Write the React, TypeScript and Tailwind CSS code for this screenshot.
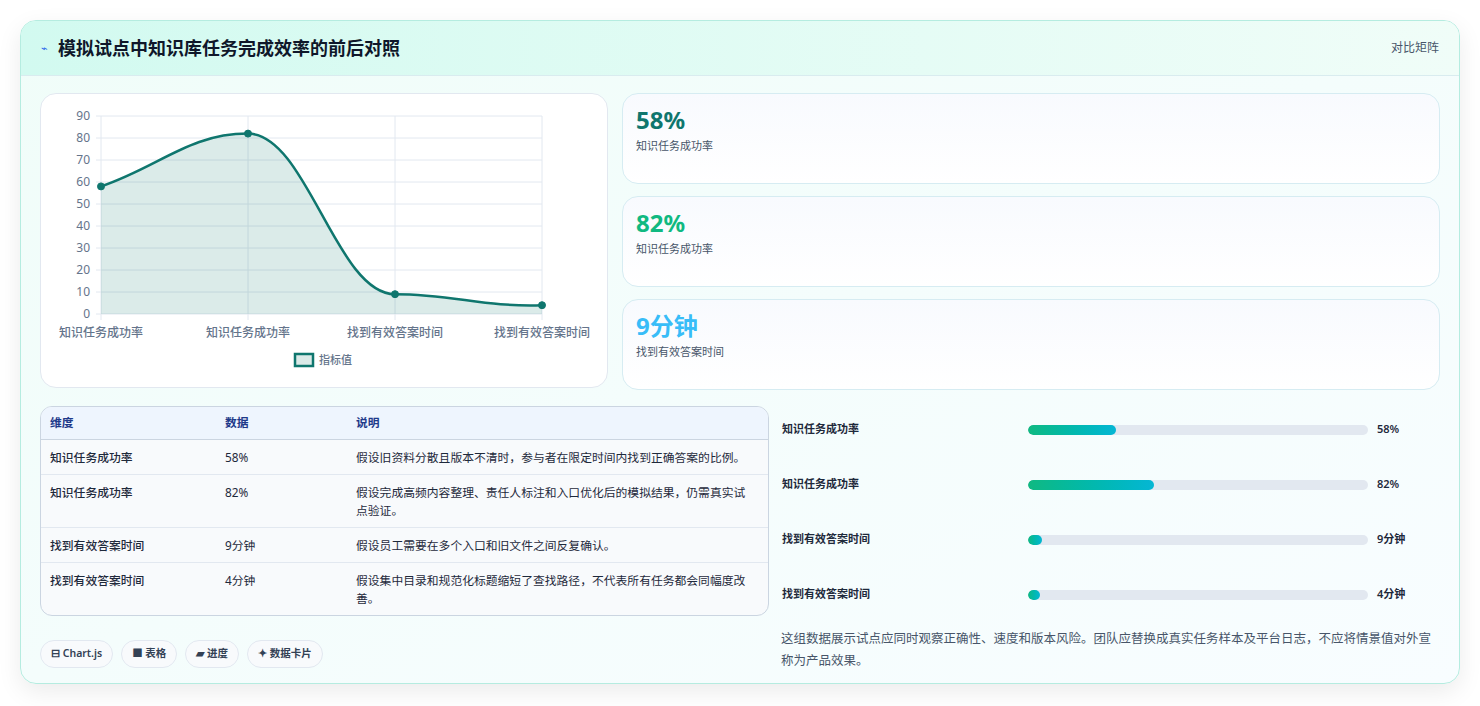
import React from "react";

const F = { fontFamily: '"Noto Sans", "Noto Sans CJK SC", sans-serif' };

function Chart() {
  const xs = [60, 207, 354, 501];
  const vals = [58, 82, 9, 4];
  const y = (v: number) => 220 - v * 2.2;
  const pts = xs.map((x, i) => [x, y(vals[i])]);
  let d = `M${pts[0][0]},${pts[0][1]}`;
  for (let i = 0; i < pts.length - 1; i++) {
    const [x0, y0] = pts[i];
    const [x1, y1] = pts[i + 1];
    const dx = (x1 - x0) * 0.4;
    d += ` C${x0 + dx},${y0 - (i === 0 ? 20 : 0)} ${x1 - dx},${y1 + (i === 2 ? 2 : 0)} ${x1},${y1}`;
  }
  const labels = ["知识任务成功率", "知识任务成功率", "找到有效答案时间", "找到有效答案时间"];
  return (
    <svg width="568" height="294" viewBox="0 0 568 294" style={F}>
      {Array.from({ length: 10 }).map((_, i) => (
        <g key={i}>
          <line x1={55} x2={501} y1={220 - i * 22} y2={220 - i * 22} stroke="#e2e8f0" />
          <text x={49} y={224 - i * 22} fontSize="12" fill="#64748b" textAnchor="end">{i * 10}</text>
        </g>
      ))}
      {xs.map((x) => (
        <line key={x} x1={x} x2={x} y1={22} y2={226} stroke="#e2e8f0" />
      ))}
      <path d={`${d} L501,220 L60,220 Z`} fill="#0f766e" fillOpacity="0.15" />
      <path d={d} fill="none" stroke="#0f766e" strokeWidth="2.5" />
      {pts.map(([x, yy], i) => (
        <circle key={i} cx={x} cy={yy} r="3.5" fill="#0f766e" stroke="#0f766e" />
      ))}
      {xs.map((x, i) => (
        <text key={i} x={x} y={243} fontSize="12" fontWeight="500" fill="#64748b" textAnchor="middle">{labels[i]}</text>
      ))}
      <rect x={254} y={260} width={18} height={12} fill="#dbeae8" stroke="#0f766e" strokeWidth="2.5" />
      <text x={278} y={270} fontSize="11" fontWeight="500" fill="#64748b">指标值</text>
    </svg>
  );
}

const rows = [
  ["知识任务成功率", "58%", "假设旧资料分散且版本不清时，参与者在限定时间内找到正确答案的比例。"],
  ["知识任务成功率", "82%", "假设完成高频内容整理、责任人标注和入口优化后的模拟结果，仍需真实试点验证。"],
  ["找到有效答案时间", "9分钟", "假设员工需要在多个入口和旧文件之间反复确认。"],
  ["找到有效答案时间", "4分钟", "假设集中目录和规范化标题缩短了查找路径，不代表所有任务都会同幅度改善。"],
];

const bars = [
  ["知识任务成功率", 26, "58%"],
  ["知识任务成功率", 37, "82%"],
  ["找到有效答案时间", 4, "9分钟"],
  ["找到有效答案时间", 3.5, "4分钟"],
] as const;

const cards = [
  ["58%", "知识任务成功率", "text-[#0f766e]"],
  ["82%", "知识任务成功率", "text-[#10b981]"],
  ["9分钟", "找到有效答案时间", "text-[#38bdf8]"],
];

export default function App() {
  return (
    <div className="w-[1480px] h-[706px] bg-white pt-5 px-5" style={F}>
      <div className="h-[664px] rounded-2xl border border-[#b5ece0] bg-gradient-to-br from-[#f0fdf9] to-[#f8fdff] shadow-[0_8px_24px_rgba(0,0,0,0.08)] overflow-hidden">
        <div className="h-[55px] flex items-center justify-between px-5 bg-gradient-to-r from-[#d2faf0] to-[#f0fdf8] border-b border-[#d9ecef]">
          <div className="flex items-center gap-2.5">
            <span className="text-[#2563eb] text-[11px]">⌁</span>
            <span className="text-[18px] font-bold text-[#0f172a]">模拟试点中知识库任务完成效率的前后对照</span>
          </div>
          <span className="text-[12px] text-[#475569]">对比矩阵</span>
        </div>
        <div className="px-[19px] pt-[17px] flex flex-col gap-4">
          <div className="flex gap-[14px]">
            <div className="w-[568px] h-[295px] rounded-2xl border border-[#e2e8f0] bg-white shrink-0">
              <Chart />
            </div>
            <div className="flex-1 flex flex-col gap-[12px]">
              {cards.map(([v, l, c], i) => (
                <div key={i} className="h-[91px] rounded-2xl border border-[#d6ecf2] bg-gradient-to-b from-[#f8fafe] to-white px-[13px] pt-[10px]">
                  <div className={`text-[24px] font-bold leading-[32px] ${c}`}>{v}</div>
                  <div className="text-[11px] text-[#475569] mt-[2px]">{l}</div>
                </div>
              ))}
            </div>
          </div>
          <div className="flex gap-3">
            <div className="w-[729px] shrink-0">
              <div className="rounded-xl border border-[#cbd5e1] overflow-hidden bg-[#f8fafc] text-[11.8px]">
                <div className="flex h-[33px] items-center bg-[#eef5fe] border-b border-[#cbd5e1] text-[#1e3a8a] font-semibold">
                  <div className="w-[184px] pl-[9px]">维度</div>
                  <div className="w-[131px]">数据</div>
                  <div className="flex-1">说明</div>
                </div>
                {rows.map((r, i) => (
                  <div key={i} className={`flex py-[8px] leading-[18px] text-[#1e293b] ${i < 3 ? "border-b border-[#e2e8f0]" : ""}`}>
                    <div className="w-[184px] pl-[9px] font-medium">{r[0]}</div>
                    <div className="w-[131px]">{r[1]}</div>
                    <div className="flex-1 pr-[14px]">{r[2]}</div>
                  </div>
                ))}
              </div>
              <div className="flex gap-2 mt-[24px] text-[10.5px] font-semibold text-[#334155]">
                {["⊟ Chart.js", "■ 表格", "▰ 进度", "✦ 数据卡片"].map((t) => (
                  <span key={t} className="h-[28px] px-[10px] flex items-center rounded-full border border-[#e2e8f0] bg-[#f8fafc]">{t}</span>
                ))}
              </div>
            </div>
            <div className="flex-1 -mt-[4px]">
              {bars.map(([l, w, v], i) => (
                <div key={i} className="flex items-center h-[55px] text-[11px] font-semibold text-[#1e293b]">
                  <div className="w-[247px] pl-px">{l}</div>
                  <div className="w-[340px] h-[10px] rounded-full bg-[#e2e8f0] overflow-hidden">
                    <div className="h-full rounded-full bg-gradient-to-r from-[#10b981] to-[#06b6d4]" style={{ width: `${w}%` }} />
                  </div>
                  <div className="pl-[9px]">{v}</div>
                </div>
              ))}
              <p className="mt-[6px] text-[12.5px] leading-[22px] text-[#475569] pr-[6px]">
                这组数据展示试点应同时观察正确性、速度和版本风险。团队应替换成真实任务样本及平台日志，不应将情景值对外宣称为产品效果。
              </p>
            </div>
          </div>
        </div>
      </div>
    </div>
  );
}
